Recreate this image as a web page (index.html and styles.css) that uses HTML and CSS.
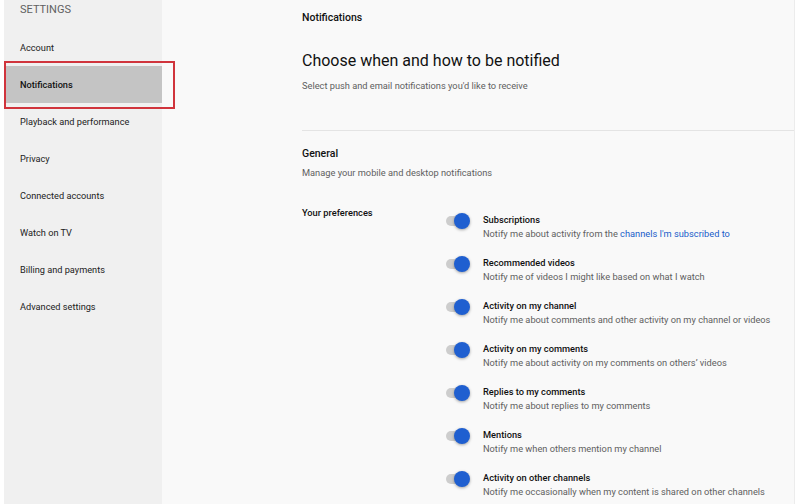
FILE: index.html
```html
<!DOCTYPE html>
<html lang="en">

<head>
  <meta charset="UTF-8" />
  <title>Settings - Notifications</title>
  <link rel="stylesheet" href="styles.css">
</head>

<body>
  <div class="page">
    <aside class="sidebar">
      <div class="sidebar-title">Settings</div>
      <nav class="nav">
        <div class="nav-item">Account</div>
        <div class="nav-item active">Notifications</div>
        <div class="nav-item">Playback and performance</div>
        <div class="nav-item">Privacy</div>
        <div class="nav-item">Connected accounts</div>
        <div class="nav-item">Watch on TV</div>
        <div class="nav-item">Billing and payments</div>
        <div class="nav-item">Advanced settings</div>
      </nav>
    </aside>

    <main class="main">
      <div class="page-title">Notifications</div>
      <h1 class="heading">Choose when and how to be notified</h1>
      <p class="subtitle">Select push and email notifications you'd like to receive</p>

      <div class="divider"></div>

      <h2 class="section-title">General</h2>
      <p class="section-desc">Manage your mobile and desktop notifications</p>

      <div class="prefs">
        <div class="prefs-label">Your preferences</div>
        <div class="options">
          <div class="option">
            <div class="toggle"><span class="track"></span><span class="knob"></span></div>
            <div class="option-text">
              <div class="option-title">Subscriptions</div>
              <div class="option-desc">Notify me about activity from the <a class="link">channels I'm subscribed to</a></div>
            </div>
          </div>
          <div class="option">
            <div class="toggle"><span class="track"></span><span class="knob"></span></div>
            <div class="option-text">
              <div class="option-title">Recommended videos</div>
              <div class="option-desc">Notify me of videos I might like based on what I watch</div>
            </div>
          </div>
          <div class="option">
            <div class="toggle"><span class="track"></span><span class="knob"></span></div>
            <div class="option-text">
              <div class="option-title">Activity on my channel</div>
              <div class="option-desc">Notify me about comments and other activity on my channel or videos</div>
            </div>
          </div>
          <div class="option">
            <div class="toggle"><span class="track"></span><span class="knob"></span></div>
            <div class="option-text">
              <div class="option-title">Activity on my comments</div>
              <div class="option-desc">Notify me about activity on my comments on others’ videos</div>
            </div>
          </div>
          <div class="option">
            <div class="toggle"><span class="track"></span><span class="knob"></span></div>
            <div class="option-text">
              <div class="option-title">Replies to my comments</div>
              <div class="option-desc">Notify me about replies to my comments</div>
            </div>
          </div>
          <div class="option">
            <div class="toggle"><span class="track"></span><span class="knob"></span></div>
            <div class="option-text">
              <div class="option-title">Mentions</div>
              <div class="option-desc">Notify me when others mention my channel</div>
            </div>
          </div>
          <div class="option">
            <div class="toggle"><span class="track"></span><span class="knob"></span></div>
            <div class="option-text">
              <div class="option-title">Activity on other channels</div>
              <div class="option-desc">Notify me occasionally when my content is shared on other channels</div>
            </div>
          </div>
        </div>
      </div>
    </main>
  </div>
</body>

</html>
```

FILE: styles.css
```css
:root {
  --sidebar-bg: #f0f0f0;
  --main-bg: #f9f9f9;
  --active-bg: #c4c4c4;
  --text-primary: #111111;
  --text-secondary: #606060;
  --link: #1a5dc9;
  --blue: #1f5fd0;
  --annotation: #d0343c;
}

* {
  box-sizing: border-box;
  margin: 0;
  padding: 0;
}

body {
  height: 100vh;
  background-color: #ffffff;
  color: var(--text-primary);
  font-family: Roboto, 'Liberation Sans', Arial, sans-serif;
  overflow: hidden;
}

.page {
  display: flex;
  height: 100%;
  padding-left: 4px;
  padding-right: 5px;
}

/* sidebar */

.sidebar {
  width: 158px;
  flex: none;
  background-color: var(--sidebar-bg);
}

.sidebar-title {
  height: 29px;
  padding: 2px 0 0 16px;
  line-height: 16px;
  font-size: 11px;
  color: var(--text-secondary);
  text-transform: uppercase;
}

.nav-item {
  height: 37px;
  display: flex;
  align-items: center;
  padding-left: 16px;
  font-size: 9.2px;
  color: #222222;
}

.nav-item.active {
  position: relative;
  margin-left: 1px;
  padding-left: 15px;
  background-color: var(--active-bg);
  font-weight: 500;
  color: #111111;
}

/* annotation frame drawn over the active item */
.nav-item.active::after {
  content: '';
  position: absolute;
  top: -5px;
  left: -1px;
  right: -13px;
  bottom: -6px;
  border: 2px solid var(--annotation);
}

/* main */

.main {
  flex: 1;
  padding-left: 140px;
  background-color: var(--main-bg);
  border-right: 1px solid #ececec;
}

.page-title {
  padding-top: 10px;
  line-height: 16px;
  font-size: 10.5px;
  font-weight: 500;
}

.heading {
  margin-top: 23px;
  line-height: 24px;
  font-size: 16px;
  font-weight: 400;
}

.subtitle {
  margin-top: 6px;
  line-height: 14px;
  font-size: 9.25px;
  color: var(--text-secondary);
}

.divider {
  margin-top: 37px;
  height: 1px;
  background-color: #e4e4e4;
}

.section-title {
  margin-top: 15px;
  line-height: 16px;
  font-size: 10.5px;
  font-weight: 500;
}

.section-desc {
  margin-top: 4px;
  line-height: 14px;
  font-size: 9.25px;
  color: var(--text-secondary);
}

.prefs {
  display: flex;
  margin-top: 26px;
}

.prefs-label {
  width: 144px;
  flex: none;
  line-height: 14px;
  font-size: 9.25px;
  font-weight: 500;
}

.options {
  display: flex;
  flex-direction: column;
  gap: 14px;
  padding-top: 6px;
}

.option {
  display: flex;
}

.toggle {
  width: 37px;
  height: 18px;
  flex: none;
  display: flex;
  align-items: center;
}

.track {
  width: 20px;
  height: 10px;
  border-radius: 5px;
  background-color: #cdcdcd;
}

.knob {
  width: 16px;
  height: 16px;
  margin-left: -12px;
  border-radius: 50%;
  background-color: var(--blue);
  box-shadow: 0 1px 3px rgba(0, 0, 0, 0.35);
}

.option-title {
  line-height: 15px;
  font-size: 9.25px;
  font-weight: 500;
}

.option-desc {
  line-height: 14px;
  font-size: 9.25px;
  color: var(--text-secondary);
}

.link {
  color: var(--link);
  text-decoration: none;
}
```
